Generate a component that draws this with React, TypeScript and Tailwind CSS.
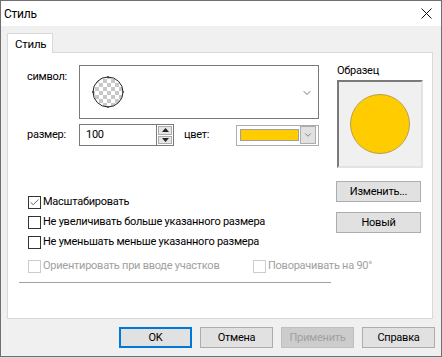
import { Check, ChevronDown } from 'lucide-react';

const font = { fontFamily: 'Roboto, "Liberation Sans", Arial, sans-serif' };

function Checkbox({ label, checked = false, disabled = false }: { label: string; checked?: boolean; disabled?: boolean }) {
  return (
    <div className="flex items-center h-[20px] whitespace-nowrap">
      <div className={`w-[13px] h-[13px] shrink-0 border bg-white flex items-center justify-center ${disabled ? 'border-[#cccccc]' : 'border-[#333333]'}`}>
        {checked && <Check className="w-[11px] h-[11px] text-[#333]" strokeWidth={1.6} />}
      </div>
      <span className={`ml-[2px] ${disabled ? 'text-[#a0a0a0]' : 'text-black'}`}>{label}</span>
    </div>
  );
}

function Btn({ children, w = 'w-[73px]', kind = 'normal' }: { children: string; w?: string; kind?: 'normal' | 'default' | 'disabled' }) {
  const cls =
    kind === 'default'
      ? 'border-2 border-[#0078d7] bg-[#e1e1e1] text-black'
      : kind === 'disabled'
        ? 'border border-[#bfbfbf] bg-[#cccccc] text-[#a0a0a0]'
        : 'border border-[#adadad] bg-[#e1e1e1] text-black';
  return <div className={`${w} h-[21px] flex items-center justify-center whitespace-nowrap ${cls}`}>{children}</div>;
}

function SymbolCircle() {
  return (
    <svg width="34" height="34" viewBox="0 0 34 34">
      <defs>
        <pattern id="chk" width="8" height="8" patternUnits="userSpaceOnUse">
          <rect width="8" height="8" fill="#ffffff" />
          <rect width="4" height="4" fill="#c8c8c8" />
          <rect x="4" y="4" width="4" height="4" fill="#c8c8c8" />
        </pattern>
      </defs>
      <circle cx="17" cy="17" r="15" fill="url(#chk)" stroke="#222" strokeWidth="1" />
      <line x1="17" y1="1" x2="17" y2="3" stroke="#222" />
      <line x1="17" y1="31" x2="17" y2="33" stroke="#222" />
      <line x1="1" y1="17" x2="3" y2="17" stroke="#222" />
      <line x1="31" y1="17" x2="33" y2="17" stroke="#222" />
    </svg>
  );
}

export default function App() {
  return (
    <div className="w-[442px] h-[358px] bg-[#d8d8d8] text-[11px] tracking-[-0.25px] leading-[16px] text-black" style={font}>
      <div className="w-[442px] h-[357px] border border-[#707070] bg-[#f0f0f0] flex flex-col">
        {/* title bar */}
        <div className="h-[25px] bg-white flex items-center pl-[3px] pr-[9px]">
          <span className="mt-[1px] text-[12px]">Стиль</span>
          <svg className="ml-auto" width="11" height="11" viewBox="0 0 11 11">
            <path d="M0.5 0.5 L10.5 10.5 M10.5 0.5 L0.5 10.5" stroke="#111" strokeWidth="1" />
          </svg>
        </div>

        <div className="pl-[6px] pt-[7px]">
          <div className="relative z-10 w-[46px] h-[20px] bg-white border border-b-0 border-[#d9d9d9] flex items-center pl-[7px] -mb-px text-[11.5px]">
            Стиль
          </div>
          <div className="w-[426px] h-[267px] bg-white border border-[#d9d9d9] flex">
            {/* left column */}
            <div className="w-[328px] shrink-0 flex flex-col">
              <div className="pl-[19px] mt-[12px] flex">
                <div className="w-[52px] pt-[4px]">символ:</div>
                <div className="w-[240px] h-[54px] border border-[#7a7a7a] bg-white flex items-center pl-[11px] pr-[5px]">
                  <SymbolCircle />
                  <ChevronDown className="ml-auto mt-[2px] w-[12px] h-[12px] text-[#444]" strokeWidth={1.5} />
                </div>
              </div>
              <div className="pl-[19px] mt-[5px] flex items-center h-[22px]">
                <div className="w-[52px]">размер:</div>
                <div className="w-[77px] h-[22px] border border-[#7a7a7a] border-r-0 bg-white flex items-center pl-[6px]">100</div>
                <div className="w-[18px] h-[22px] border border-[#7a7a7a] bg-white flex flex-col p-[1px] gap-[1px]">
                  <div className="flex-1 bg-[#e5e5e5] border border-[#adadad] flex items-center justify-center">
                    <svg width="7" height="4" viewBox="0 0 7 4"><path d="M0 4 L3.5 0 L7 4 Z" fill="#222" /></svg>
                  </div>
                  <div className="flex-1 bg-[#e5e5e5] border border-[#adadad] flex items-center justify-center">
                    <svg width="7" height="4" viewBox="0 0 7 4"><path d="M0 0 L3.5 4 L7 0 Z" fill="#222" /></svg>
                  </div>
                </div>
                <div className="ml-[10px] w-[52px]">цвет:</div>
                <div className="w-[83px] h-[21px] border border-[#adadad] bg-white flex items-center pl-[3px] pr-[2px]">
                  <div className="w-[59px] h-[12px] bg-[#ffcc00] border border-[#a0a0a0]" />
                  <div className="ml-auto w-[16px] h-[18px] bg-[#e1e1e1] border border-[#adadad] flex items-center justify-center">
                    <ChevronDown className="w-[10px] h-[10px] text-[#444]" strokeWidth={1.5} />
                  </div>
                </div>
              </div>
              <div className="pl-[20px] mt-[46px] flex flex-col">
                <Checkbox label="Масштабировать" checked />
                <Checkbox label="Не увеличивать больше указанного размера" />
                <Checkbox label="Не уменьшать меньше указанного размера" />
                <div className="mt-[4px] flex">
                  <div className="w-[225px] shrink-0">
                    <Checkbox label="Ориентировать при вводе участков" disabled />
                  </div>
                  <div className="shrink-0">
                    <Checkbox label="Поворачивать на 90°" disabled />
                  </div>
                </div>
              </div>
              <div className="ml-[11px] mt-[6px] w-[312px] h-px bg-[#a0a0a0]" />
            </div>

            {/* right column */}
            <div className="w-[87px] flex flex-col">
              <div className="mt-[10px] ml-[1px]">Образец</div>
              <div className="mt-[1px] ml-[1px] w-[86px] h-[88px] border-2 border-t-[#7a7a7a] border-l-[#7a7a7a] border-b-[#e3e3e3] border-r-[#e3e3e3] bg-[#f0f0f0] flex items-center justify-center">
                <svg width="62" height="62" viewBox="0 0 62 62">
                  <circle cx="31" cy="31" r="29.5" fill="#ffcc00" stroke="#b8a050" strokeWidth="1" />
                </svg>
              </div>
              <div className="mt-[13px]">
                <Btn w="w-[85px]">Изменить...</Btn>
              </div>
              <div className="mt-[10px]">
                <Btn w="w-[85px]">Новый</Btn>
              </div>
            </div>
          </div>
        </div>

        {/* footer */}
        <div className="mt-[8px] flex justify-end gap-[8px] pr-[6px]">
          <Btn kind="default">OK</Btn>
          <Btn>Отмена</Btn>
          <Btn kind="disabled">Применить</Btn>
          <Btn>Справка</Btn>
        </div>
      </div>
    </div>
  );
}
